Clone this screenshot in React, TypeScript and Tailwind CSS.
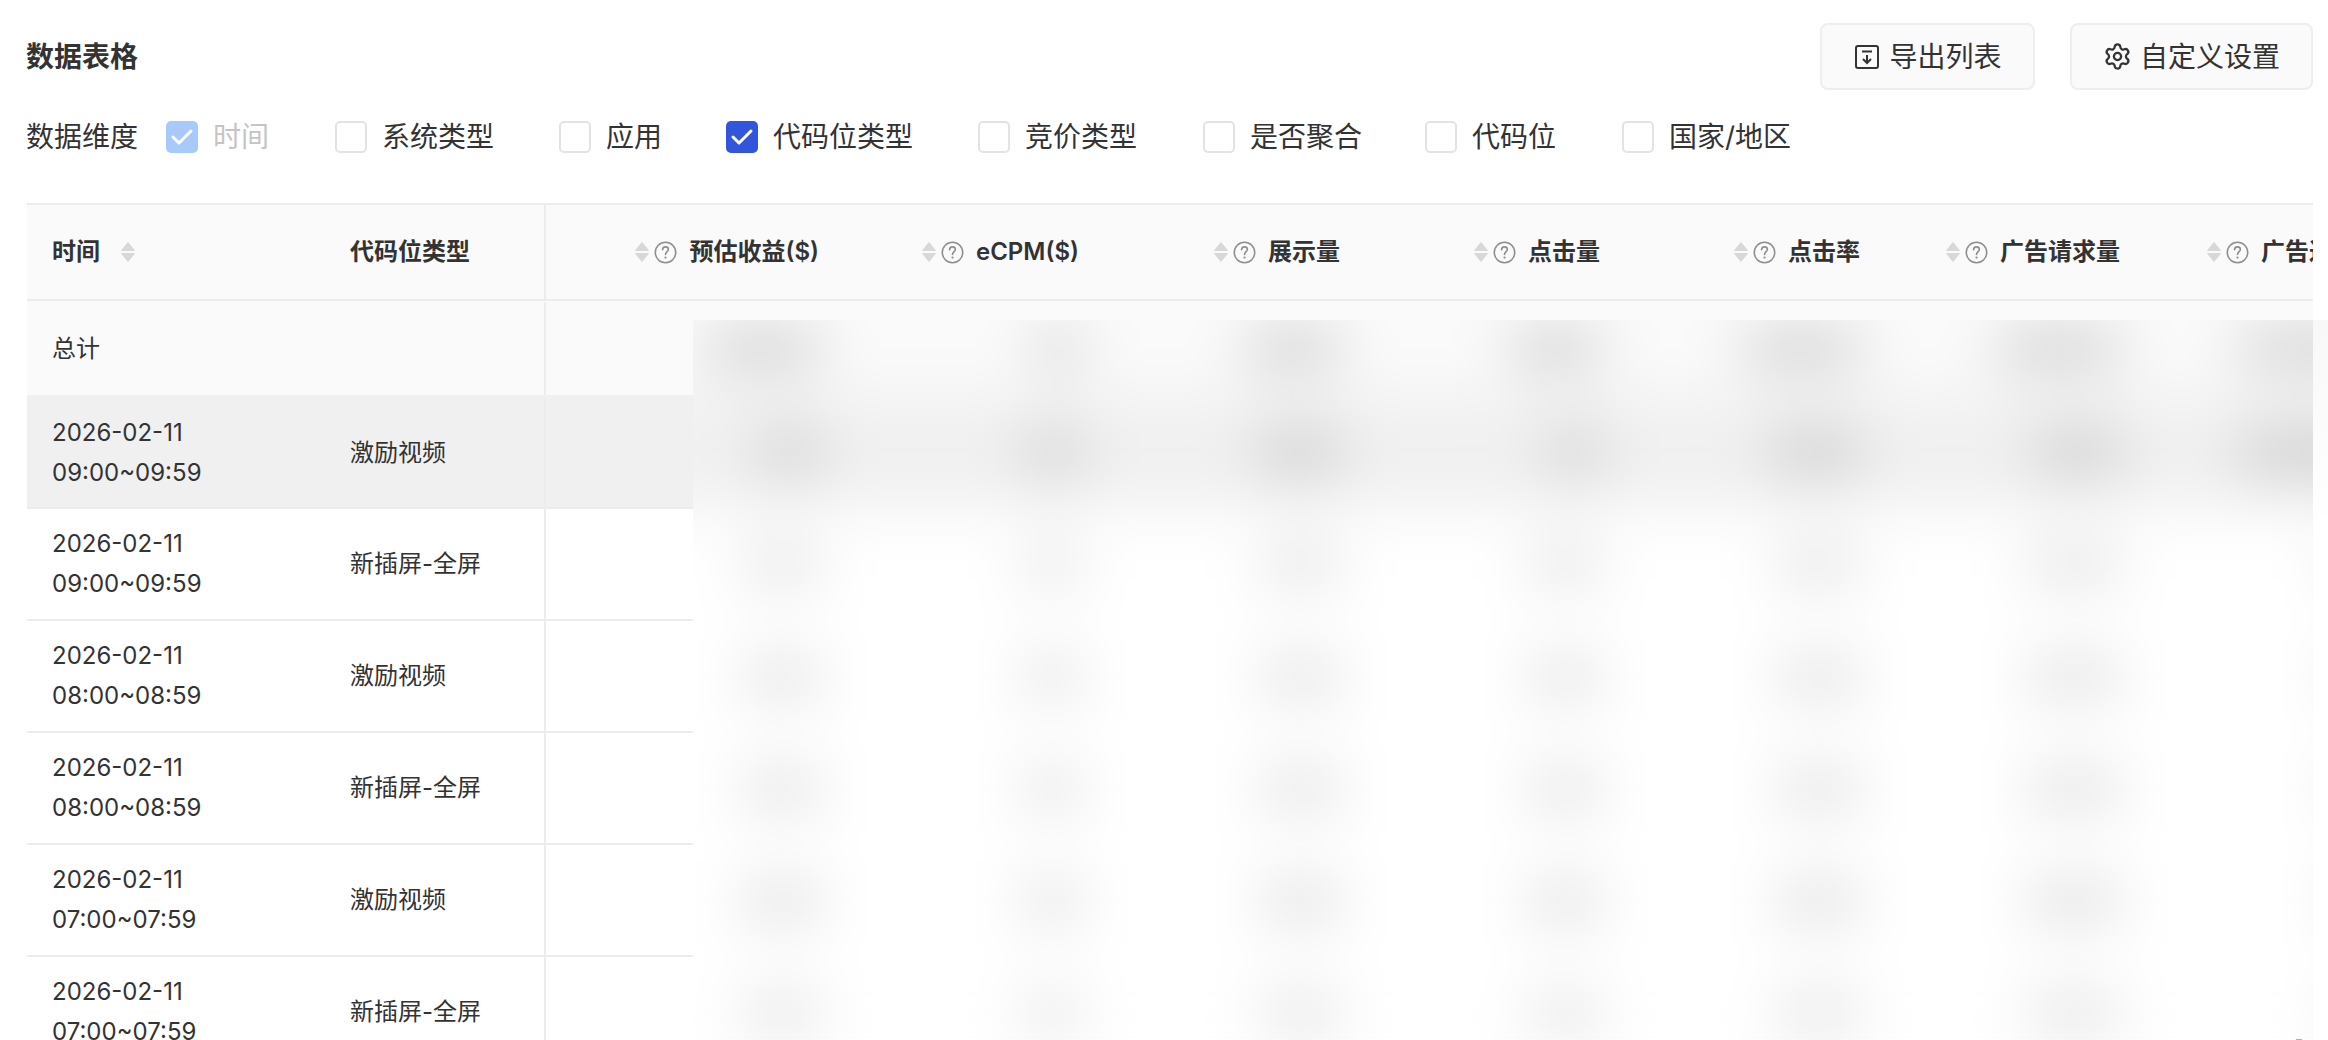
import { Settings } from 'lucide-react'

const FONT = "font-['Inter','Noto_Sans_CJK_SC',sans-serif]"

const dimensions = [
  { label: '时间', checked: true, disabled: true, width: 'w-[169px]' },
  { label: '系统类型', width: 'w-[224px]' },
  { label: '应用', width: 'w-[167px]' },
  { label: '代码位类型', checked: true, width: 'w-[252px]' },
  { label: '竞价类型', width: 'w-[225px]' },
  { label: '是否聚合', width: 'w-[222px]' },
  { label: '代码位', width: 'w-[197px]' },
  { label: '国家/地区', width: 'w-auto' },
]

const metrics = [
  { label: '预估收益($)', width: 'w-[299px]', pad: 'pr-[26px]' },
  { label: 'eCPM($)', width: 'w-[260px]', pad: 'pr-[26px]' },
  { label: '展示量', width: 'w-[260px]', pad: 'pr-[25px]' },
  { label: '点击量', width: 'w-[260px]', pad: 'pr-[25px]' },
  { label: '点击率', width: 'w-[260px]', pad: 'pr-[25px]' },
  { label: '广告请求量', width: 'w-[260px]', pad: 'pr-[25px]' },
  { label: '广告返回量', width: 'w-[261px]', pad: 'pr-[25px]' },
]

const rows = [
  { date: '2026-02-11', time: '09:00~09:59', type: '激励视频', hover: true },
  { date: '2026-02-11', time: '09:00~09:59', type: '新插屏-全屏' },
  { date: '2026-02-11', time: '08:00~08:59', type: '激励视频' },
  { date: '2026-02-11', time: '08:00~08:59', type: '新插屏-全屏' },
  { date: '2026-02-11', time: '07:00~07:59', type: '激励视频' },
  { date: '2026-02-11', time: '07:00~07:59', type: '新插屏-全屏' },
]

// masked values: one smudge per metric column, right aligned like the numbers
const smudgeCols = ['w-[232px]', 'w-[260px]', 'w-[260px]', 'w-[260px]', 'w-[260px]', 'w-[260px]', 'w-[261px]']
const restWidths = ['w-[74px]', 'w-[54px]', 'w-[76px]', 'w-[68px]', 'w-[80px]', 'w-[90px]', 'w-[50px]']
const smudgeRows = [
  { height: 'h-[100px]', bg: 'bg-[#fafafa]', tone: 'bg-transparent', widths: restWidths },
  { height: 'h-[94px]', bg: 'bg-[#fafafa]', tone: 'bg-black/[0.17]', widths: ['w-[112px]', 'w-[42px]', 'w-[92px]', 'w-[86px]', 'w-[114px]', 'w-[120px]', 'w-[140px]'] },
  { height: 'h-[114px]', bg: 'bg-[#f0f0f0]', tone: 'bg-black/[0.15]', widths: ['w-[58px]', 'w-[52px]', 'w-[80px]', 'w-[50px]', 'w-[88px]', 'w-[84px]', 'w-[140px]'] },
  { height: 'h-[112px]', bg: 'bg-white', tone: 'bg-black/[0.11]', widths: restWidths },
  { height: 'h-[112px]', bg: 'bg-white', tone: 'bg-black/[0.12]', widths: restWidths },
  { height: 'h-[112px]', bg: 'bg-white', tone: 'bg-black/[0.12]', widths: restWidths },
  { height: 'h-[112px]', bg: 'bg-white', tone: 'bg-black/[0.13]', widths: restWidths },
  { height: 'h-[112px]', bg: 'bg-white', tone: 'bg-black/[0.11]', widths: restWidths },
]

function SortIcon() {
  return (
    <svg width="16" height="22" viewBox="0 0 16 22" className="shrink-0">
      <path d="M8 1.5 L14.5 9.5 H1.5 Z" fill="#d8d8d8" stroke="#d8d8d8" strokeLinejoin="round" />
      <path d="M1.5 12.5 H14.5 L8 20.5 Z" fill="#d8d8d8" stroke="#d8d8d8" strokeLinejoin="round" />
    </svg>
  )
}

function HelpIcon() {
  return (
    <svg width="23" height="23" viewBox="0 0 23 23" fill="none" className="shrink-0">
      <circle cx="11.5" cy="11.5" r="10.2" stroke="#8f8f8f" strokeWidth="1.6" />
      <path d="M8.6 8.8 C8.6 6.9 9.9 5.9 11.5 5.9 C13.2 5.9 14.4 6.9 14.4 8.5 C14.4 10.5 11.5 10.8 11.5 13.4" stroke="#8f8f8f" strokeWidth="1.6" strokeLinecap="round" />
      <circle cx="11.5" cy="16.6" r="1.1" fill="#8f8f8f" />
    </svg>
  )
}

function ExportIcon() {
  return (
    <svg width="24" height="24" viewBox="0 0 24 24" fill="none" stroke="#333" strokeWidth="2" className="shrink-0">
      <rect x="1" y="1" width="22" height="22" rx="2" />
      <path d="M7 6.5 H17" />
      <path d="M12 10 V18 M8 14 L12 18 L16 14" />
    </svg>
  )
}

function Checkbox({ checked, disabled }: { checked?: boolean; disabled?: boolean }) {
  if (checked) {
    return (
      <span className={`flex h-[32px] w-[32px] shrink-0 items-center justify-center rounded-[5px] ${disabled ? 'bg-[#a9c9fb]' : 'bg-[#3355dc]'}`}>
        <svg width="32" height="32" viewBox="0 0 32 32" fill="none">
          <path d="M7 16 L13 22 L25 10" stroke="#fff" strokeWidth="3" strokeLinecap="round" strokeLinejoin="round" />
        </svg>
      </span>
    )
  }
  return <span className="h-[32px] w-[32px] shrink-0 rounded-[5px] border-2 border-[#e3e3e3] bg-white" />
}

function MetricHeader({ label, width, pad }: { label: string; width: string; pad: string }) {
  return (
    <div className={`flex shrink-0 items-center justify-end ${pad} ${width}`}>
      <SortIcon />
      <span className="ml-[4px]">
        <HelpIcon />
      </span>
      <span className="ml-[12px] whitespace-nowrap text-[24px] font-semibold text-[#333]">{label}</span>
    </div>
  )
}

function MaskedValues() {
  return (
    <div className="absolute left-[666px] right-0 top-[115px] bottom-0 overflow-hidden bg-white">
      <div className="absolute -left-[80px] -top-[119px] w-[1900px] blur-[30px]">
        {smudgeRows.map((row, r) => (
          <div key={r} className={`flex items-center ${row.height} ${row.bg}`}>
            {smudgeCols.map((col, c) => (
              <div key={c} className={`flex shrink-0 justify-end pr-[26px] ${col}`}>
                <div className={`h-[40px] ${row.widths[c]} ${row.tone}`} />
              </div>
            ))}
          </div>
        ))}
      </div>
    </div>
  )
}

export default function App() {
  return (
    <main className={`relative h-[1040px] overflow-hidden bg-white pl-[27px] pr-[15px] pt-[23px] text-[#333] ${FONT}`}>
      {/* Title + actions */}
      <div className="flex h-[67px] items-center justify-between">
        <h2 className="-ml-[1px] text-[28px] font-semibold">数据表格</h2>
        <div className="flex gap-[35px]">
          <button className="flex h-[67px] w-[215px] items-center justify-center gap-[10px] rounded-[8px] border-2 border-[#eeeeee] bg-[#fafafa] pl-[2px] text-[28px]">
            <ExportIcon />
            导出列表
          </button>
          <button className="flex h-[67px] w-[243px] items-center justify-center gap-[8px] rounded-[8px] border-2 border-[#eeeeee] bg-[#fafafa] text-[28px]">
            <Settings size={29} strokeWidth={1.9} color="#333" />
            自定义设置
          </button>
        </div>
      </div>

      {/* Dimension filters */}
      <div className="-ml-[1px] mt-[27px] flex h-[40px] items-center text-[28px]">
        <span className="mr-[28px] whitespace-nowrap">数据维度</span>
        {dimensions.map((d) => (
          <label key={d.label} className={`flex items-center gap-[15px] ${d.width}`}>
            <Checkbox checked={d.checked} disabled={d.disabled} />
            <span className={`whitespace-nowrap ${d.disabled ? 'text-[#c4c4c4]' : ''}`}>{d.label}</span>
          </label>
        ))}
      </div>

      {/* Table */}
      <div className="relative mt-[46px] overflow-hidden border-t-2 border-[#ececec]">
        <div className="flex h-[96px] border-b-2 border-[#ececec] bg-[#fafafa] text-[24px] font-semibold">
          <div className="flex w-[298px] shrink-0 items-center gap-[20px] pl-[25px]">
            时间
            <SortIcon />
          </div>
          <div className="flex w-[221px] shrink-0 items-center border-r-2 border-[#ececec] pl-[25px]">代码位类型</div>
          {metrics.map((m) => (
            <MetricHeader key={m.label} label={m.label} width={m.width} pad={m.pad} />
          ))}
        </div>

        <div className="flex h-[94px] bg-[#fafafa] pt-[1px] text-[24px]">
          <div className="flex w-[298px] shrink-0 items-center pl-[25px]">总计</div>
          <div className="w-[221px] shrink-0 border-r-2 border-[#ececec]" />
        </div>

        {rows.map((row, i) => (
          <div
            key={i}
            className={`flex border-b-2 border-[#ececec] text-[24px] ${row.hover ? 'h-[114px] bg-[#f0f0f0] pt-[3px]' : 'h-[112px] bg-white'}`}
          >
            <div className="flex w-[298px] shrink-0 flex-col justify-center pl-[25px] leading-[40px]">
              <span>{row.date}</span>
              <span>{row.time}</span>
            </div>
            <div className="flex w-[221px] shrink-0 items-center border-r-2 border-[#ececec] pl-[25px]">{row.type}</div>
          </div>
        ))}

        <MaskedValues />
      </div>

      {/* blur spill past the table edge */}
      <div className="absolute right-0 top-[320px] h-[210px] w-[15px] bg-gradient-to-b from-[#f8f8f8] to-white" />
      <div className="absolute bottom-0 right-[26px] h-[1px] w-[6px] bg-[#e8a25c]" />
    </main>
  )
}
